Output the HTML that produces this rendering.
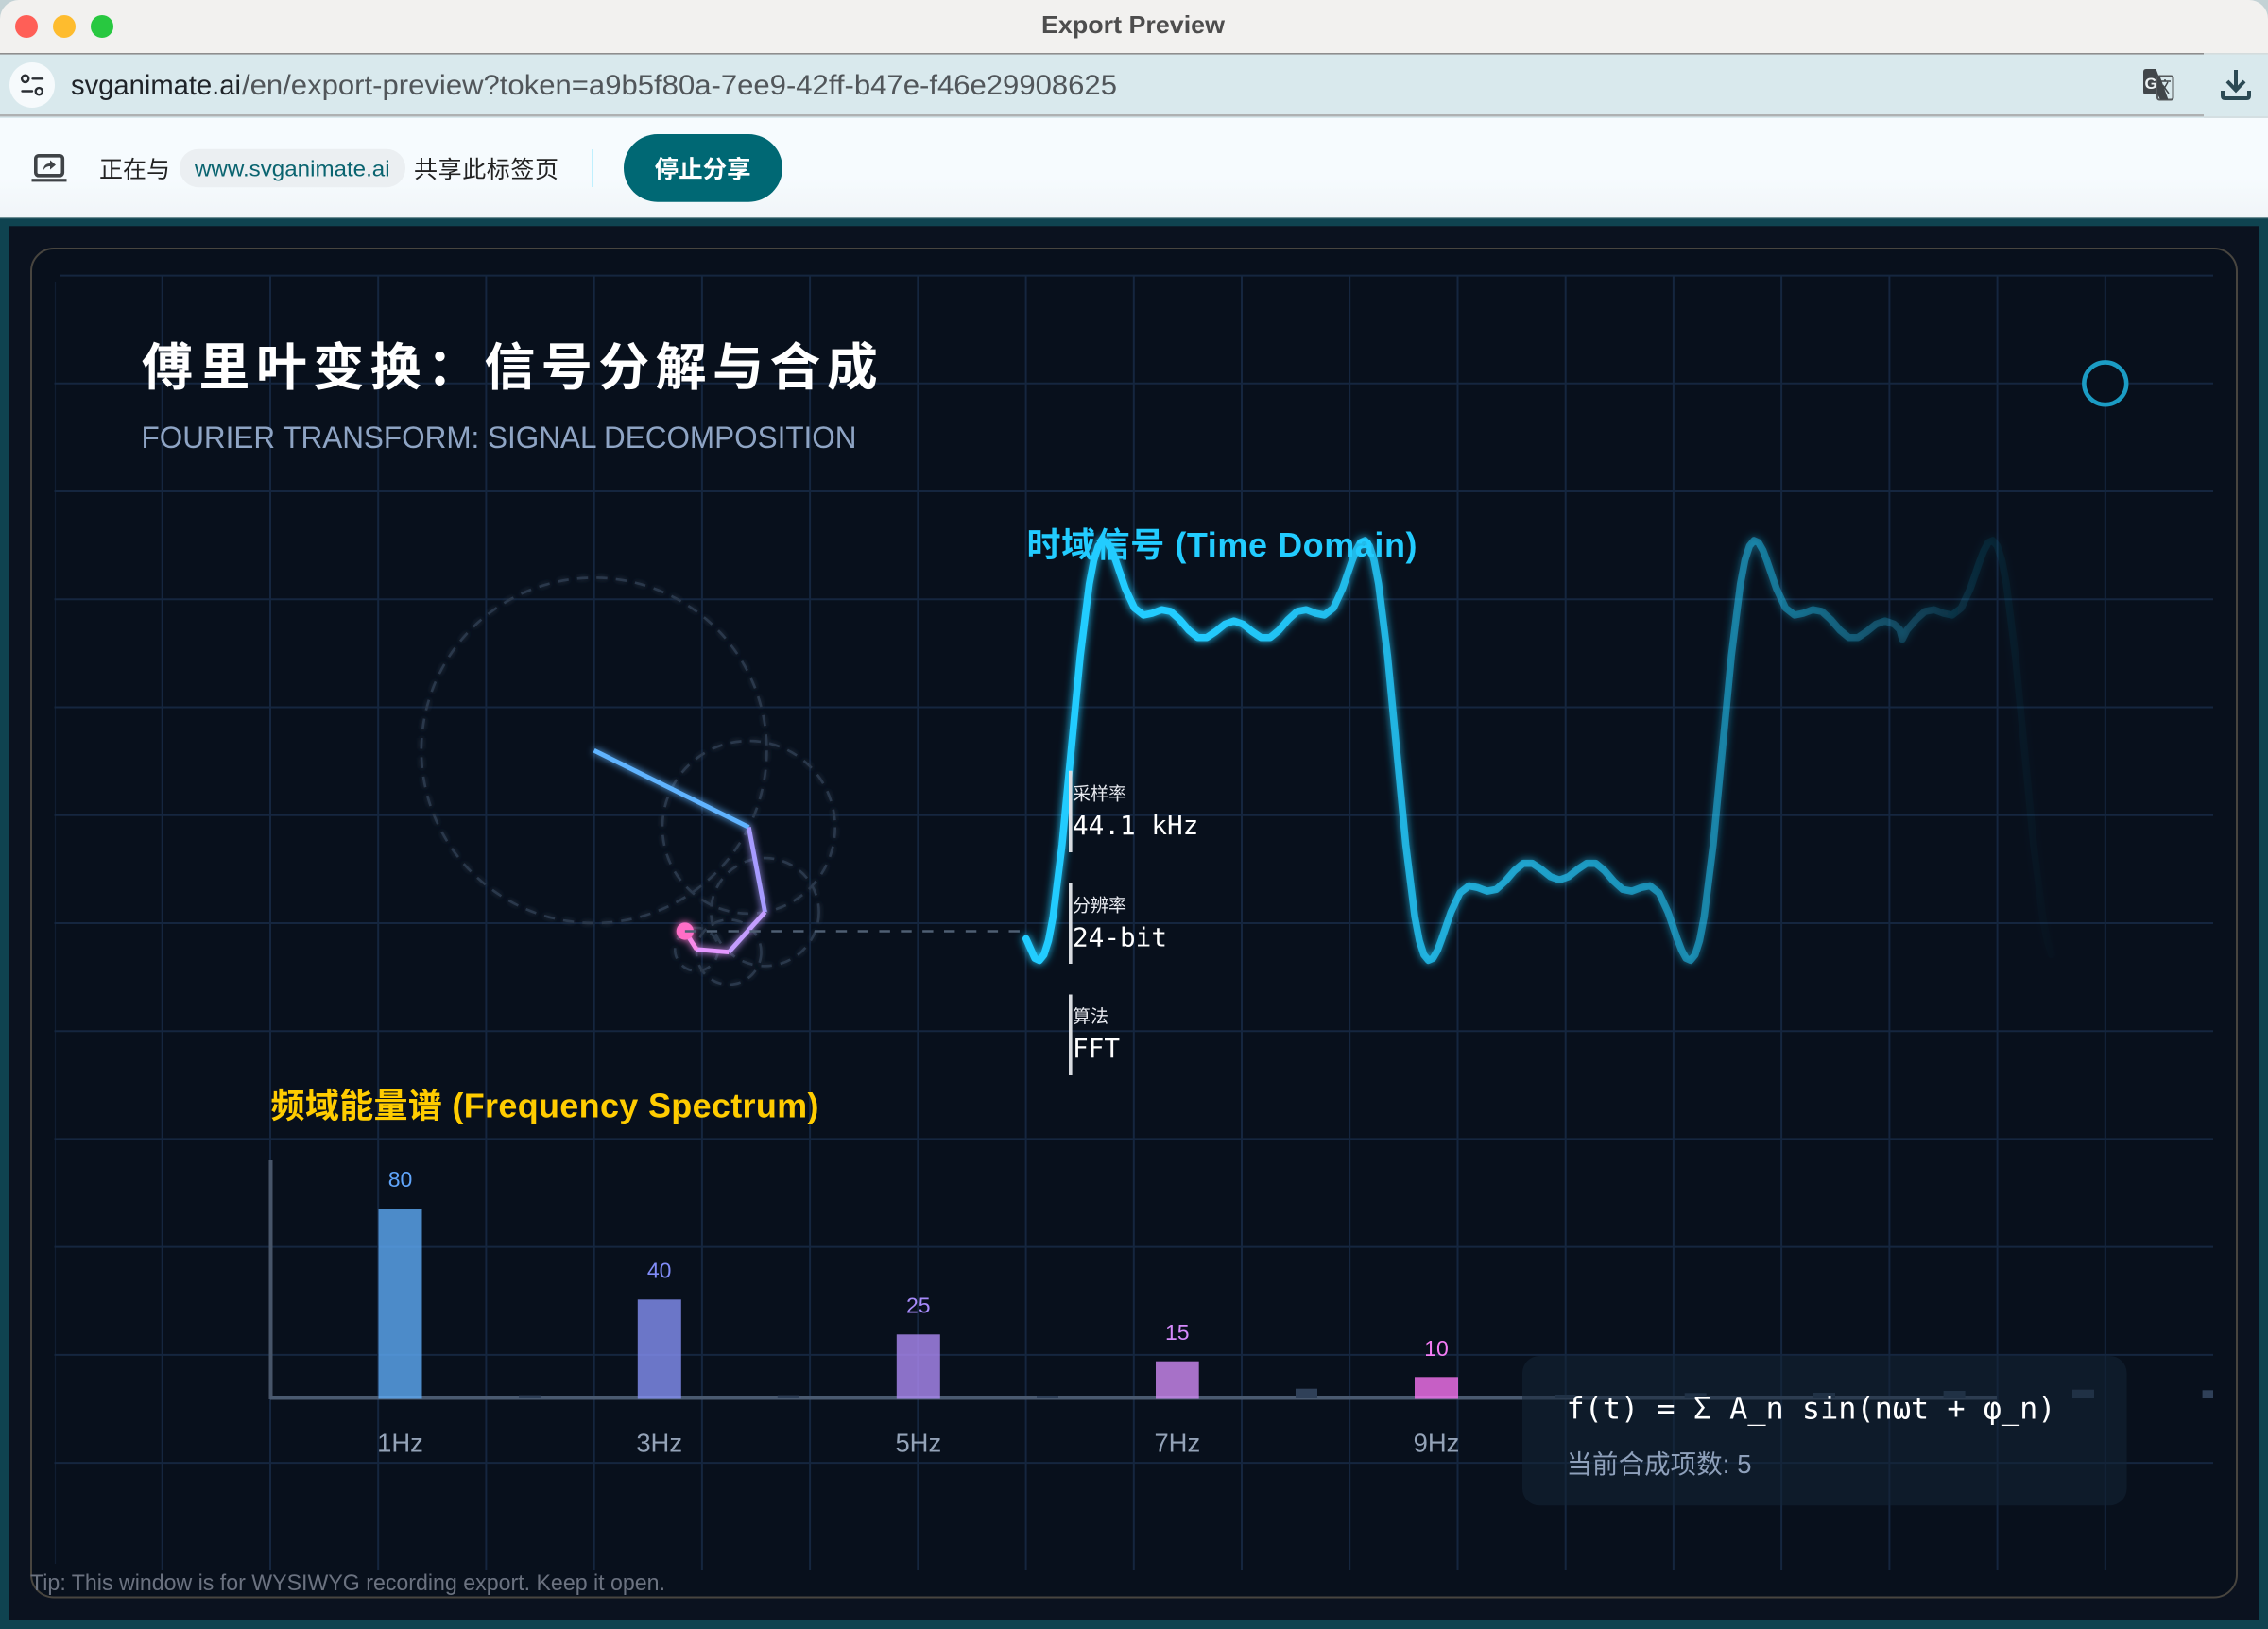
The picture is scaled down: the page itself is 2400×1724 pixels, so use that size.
<!DOCTYPE html>
<html lang="zh">
<head>
<meta charset="utf-8">
<title>Export Preview</title>
<style>
html,body{margin:0;padding:0;background:#c3d2d5;width:2400px;height:1724px;overflow:hidden}
svg{display:block}
text{font-family:"Liberation Sans","Noto Sans CJK SC",sans-serif}
.mono{font-family:"DejaVu Sans Mono","Liberation Mono","Noto Sans CJK SC",monospace}
</style>
</head>
<body>
<svg xmlns="http://www.w3.org/2000/svg" width="2400" height="1724" viewBox="0 0 2400 1724">
<defs>
  <linearGradient id="fade" gradientUnits="userSpaceOnUse" x1="450" y1="0" x2="930" y2="0">
    <stop offset="0" stop-color="#24ccff" stop-opacity="1"/>
    <stop offset=".15" stop-color="#24ccff" stop-opacity="1"/>
    <stop offset=".38" stop-color="#24ccff" stop-opacity=".74"/>
    <stop offset=".70" stop-color="#24ccff" stop-opacity=".44"/>
    <stop offset=".90" stop-color="#24ccff" stop-opacity=".11"/>
    <stop offset=".96" stop-color="#24ccff" stop-opacity=".03"/>
    <stop offset="1" stop-color="#24ccff" stop-opacity="0"/>
  </linearGradient>
  <linearGradient id="bar" x1="0" y1="0" x2="0" y2="1">
    <stop offset="0" stop-color="#f6fbfe"/>
    <stop offset=".6" stop-color="#f6fbfe"/>
    <stop offset="1" stop-color="#f1f5f8"/>
  </linearGradient>
  <filter id="glow" filterUnits="userSpaceOnUse" x="0" y="0" width="1000" height="600">
    <feGaussianBlur stdDeviation="2" result="b"/>
    <feMerge><feMergeNode in="b"/><feMergeNode in="SourceGraphic"/></feMerge>
  </filter>
  <filter id="glow2" filterUnits="userSpaceOnUse" x="0" y="0" width="1000" height="600">
    <feGaussianBlur stdDeviation="1.8" result="b"/>
    <feMerge><feMergeNode in="b"/><feMergeNode in="SourceGraphic"/></feMerge>
  </filter>
  <filter id="glow3" filterUnits="userSpaceOnUse" x="0" y="0" width="1000" height="600">
    <feGaussianBlur stdDeviation="1.2" result="b"/>
    <feMerge><feMergeNode in="b"/><feMergeNode in="SourceGraphic"/></feMerge>
  </filter>
</defs>

<!-- window chrome -->
<rect x="0" y="0" width="2400" height="80" rx="20" fill="#f2f1ef"/>
<rect x="0" y="40" width="2400" height="17" fill="#f2f1ef"/>
<rect x="0" y="57" width="2400" height="68" fill="#d9e9ed"/>
<rect x="0" y="56" width="2332" height="1.6" fill="#8e8e8e"/>
<rect x="2332" y="56" width="68" height="1.6" fill="#d4dcdd"/>
<rect x="0" y="121" width="2332" height="2.4" fill="#aeb1b2"/>
<rect x="2332" y="123" width="68" height="2" fill="#d4dfe2"/>
<rect x="0" y="125" width="2400" height="105" fill="url(#bar)"/>

<circle cx="28" cy="28" r="12" fill="#ff5f57"/>
<circle cx="68" cy="28" r="12" fill="#febc2e"/>
<circle cx="108" cy="28" r="12" fill="#28c840"/>
<text x="1102" y="35" font-size="26" font-weight="700" fill="#4d4d4d" textLength="194" lengthAdjust="spacingAndGlyphs">Export Preview</text>

<!-- address bar -->
<circle cx="34" cy="90" r="24" fill="#f6fafc"/>
<g fill="none" stroke="#2a2e33" stroke-width="2.4" stroke-linecap="round">
  <circle cx="26.7" cy="83.3" r="3.6"/>
  <path d="M34.5 83.3H45"/>
  <path d="M23.5 96.5H34"/>
  <circle cx="41.3" cy="96.7" r="3.6"/>
</g>
<text x="75" y="100" font-size="30" fill="#1f2328" textLength="180" lengthAdjust="spacingAndGlyphs">svganimate.ai</text>
<text x="256" y="100" font-size="30" fill="#51565a" textLength="926" lengthAdjust="spacingAndGlyphs">/en/export-preview?token=a9b5f80a-7ee9-42ff-b47e-f46e29908625</text>

<!-- translate icon -->
<path d="M2268 76q0-3 3-3h10.5l12.5 33h-8.500l-2-6h-13q-2.500 0-2.500-3z" fill="#41464a"/>
<rect x="2283" y="80.500" width="16.500" height="25" rx="2" fill="#d9e9ed" stroke="#55595c" stroke-width="2"/>
<path d="M2283 80.500h2.500l9 25h-8.500l-3-6z" fill="#41464a"/>
<text x="2269.500" y="94" font-size="17" font-weight="700" fill="#eef3f4">G</text>
<path d="M2285 86h12M2291 84v2M2287 99l7-12M2288.500 90l6.500 9" fill="none" stroke="#41464a" stroke-width="1.500"/>

<!-- download icon -->
<g fill="none" stroke="#2c4a54" stroke-width="4">
  <path d="M2366 74V95"/>
  <path d="M2357 86l9 9.500 9-9.500"/>
  <path d="M2352 96v5.500q0 2.500 2.500 2.500h23q2.500 0 2.500-2.500V96"/>
</g>

<!-- sharing infobar -->
<rect x="37.800" y="164.800" width="28.500" height="21" rx="3" fill="none" stroke="#3f4347" stroke-width="3.600"/>
<rect x="33.500" y="189.200" width="37" height="3.200" fill="#3f4347"/>
<path d="M46 180c0-5 3-7 7-7v-3.500l6 5-6 5V176c-3 0-5 1-7 4z" fill="#3f4347"/>
<text x="105" y="188" font-size="25" fill="#222" textLength="75">正在与</text>
<rect x="190" y="157.700" width="239" height="40.500" rx="20" fill="#ebeff2"/>
<text x="206" y="186.500" font-size="23.500" fill="#0a6470" textLength="206.600" lengthAdjust="spacingAndGlyphs">www.svganimate.ai</text>
<text x="438" y="188" font-size="25" fill="#222" textLength="153">共享此标签页</text>
<rect x="626.300" y="158" width="1.500" height="40" fill="#a8ecff"/>
<rect x="660" y="142" width="168" height="71.700" rx="35.800" fill="#006874"/>
<text x="692.600" y="188" font-size="25.500" font-weight="700" fill="#fff" textLength="102">停止分享</text>

<!-- stage -->
<rect x="0" y="230" width="2400" height="1494" fill="#0f4350"/>
<rect x="0" y="230" width="2400" height="1.200" fill="#6f8f94"/>
<rect x="10" y="239.300" width="2380" height="1474.700" fill="#0b121f"/>
<rect x="33" y="263" width="2334" height="1427.500" rx="24" fill="#08101c" stroke="#48453f" stroke-width="2"/>

<!-- grid -->
<g fill="none" stroke="#15263f" stroke-width="2">
  <path d="M64 291.600H2342M57.500 405.800H2342M57.500 520H2342M57.500 634.300H2342M57.500 748.500H2342M57.500 862.700H2342M57.500 977H2342M57.500 1091.200H2342M57.500 1205.400H2342M57.500 1319.600H2342M57.500 1433.900H2342M57.500 1548.100H2342"/>
  <path d="M171.700 291.600V1662M286 291.600V1662M400.200 291.600V1662M514.400 291.600V1662M628.700 291.600V1662M742.900 291.600V1662M857.100 291.600V1662M971.300 291.600V1662M1085.600 291.600V1662M1199.800 291.600V1662M1314 291.600V1662M1428.200 291.600V1662M1542.500 291.600V1662M1656.700 291.600V1662M1770.900 291.600V1662M1885.100 291.600V1662M1999.400 291.600V1662M2113.600 291.600V1662M2227.800 291.600V1662"/>
  <path d="M58.500 298V1655" stroke-width="1.200" opacity=".6"/>
</g>

<!-- headings -->
<text x="150" y="407.500" font-size="54" font-weight="700" fill="#fff" letter-spacing="6.400">傅里叶变换：信号分解与合成</text>
<text x="149.500" y="474" font-size="32" fill="#8ea4c4" textLength="757" lengthAdjust="spacingAndGlyphs">FOURIER TRANSFORM: SIGNAL DECOMPOSITION</text>
<g transform="translate(57.500 291.600) scale(2.2845)">
  <circle cx="950" cy="50" r="9.800" fill="#08101c" stroke="#1b9cc4" stroke-width="2"/>
  <!-- epicycle circles -->
  <g fill="none" stroke="#2b394c" stroke-width="1.150" stroke-dasharray="5 4" filter="url(#glow3)">
    <circle cx="250" cy="220" r="80"/>
    <circle cx="321.660" cy="255.570" r="40"/>
    <circle cx="329.160" cy="294.860" r="25"/>
    <circle cx="312.430" cy="313.440" r="15"/>
    <circle cx="297.480" cy="312.180" r="10"/>
  </g>
  <!-- arms -->
  <g fill="none" stroke-width="2.100" filter="url(#glow2)">
    <path d="M250 220L321.660 255.570" stroke="#60b4ff"/>
    <path d="M321.660 255.570L329.160 294.860" stroke="#a79bff"/>
    <path d="M329.160 294.860L312.430 313.440" stroke="#c49dff"/>
    <path d="M312.430 313.440L297.480 312.180" stroke="#e597ff"/>
    <path d="M297.480 312.180L292.120 303.740" stroke="#f88ae8"/>
    <circle cx="292.120" cy="303.740" r="4" fill="#ff6ec7" stroke="none"/>
  </g>
  <path d="M292.120 303.740H448" fill="none" stroke="#4f5f73" stroke-width="1.100" stroke-dasharray="5 5"/>
  <!-- time-domain wave -->
  <polyline transform="translate(.4 0)" filter="url(#glow)" fill="none" stroke="url(#fade)" stroke-width="3.300" stroke-linejoin="round" stroke-linecap="round"
   points="449.700,307.200 453.800,316.300 455.900,317.300 458,314.700 460.100,308.100 462.200,297.100 466.400,263.600 470.600,220 474.800,176.400 479,142.900 481.100,131.900 483.200,125.300 485.300,122.750 487.400,123.700 489.500,127.400 491.500,132.800 495.700,145 499.900,154 504.100,157.300 508.300,156.400 512.500,154.800 516.700,155.600 520.900,159.400 525.100,164.300 529.200,167.700 533.400,167.700 537.600,164.900 541.800,161.500 546,160 550.200,161.500 554.400,164.900 558.600,167.700 562.800,167.700 566.900,164.300 571.100,159.400 575.300,155.600 579.500,154.800 583.700,156.400 587.900,157.300 592.100,154 596.300,145 600.500,132.800 602.600,127.400 604.600,123.700 606.700,122.750 608.800,125.300 610.900,131.900 613,142.900 617.200,176.400 621.400,220 625.600,263.600 629.800,297.100 631.900,308.100 634,314.700 636.100,317.250 638.200,316.300 640.300,312.600 642.300,307.200 646.500,295 650.700,286 654.900,282.700 659.100,283.600 663.300,285.200 667.500,284.400 671.700,280.600 675.900,275.700 680,272.300 684.200,272.300 688.400,275.100 692.600,278.500 696.800,280 701,278.500 705.200,275.100 709.400,272.300 713.600,272.300 717.700,275.700 721.900,280.600 726.100,284.400 730.300,285.200 734.500,283.600 738.700,282.700 742.900,286 747.100,295 751.300,307.200 753.400,312.600 755.400,316.300 757.500,317.250 759.600,314.700 761.700,308.100 763.800,297.100 768,263.600 772.200,220 776.400,176.400 780.600,142.900 782.700,131.900 784.800,125.300 786.900,122.750 789,123.700 791.100,127.400 793.100,132.800 797.300,145 801.500,154 805.700,157.300 809.900,156.400 814.100,154.800 818.300,155.600 822.500,159.400 826.700,164.300 830.800,167.700 835,167.700 839.200,164.900 843.400,161.500 847.600,160 851.800,161.500 854.400,164 855.600,168.500 857.700,164.300 861.900,159.400 866.100,155.600 870.300,154.800 874.500,156.400 878.700,157.300 882.900,154 887.100,145 891.300,132.800 893.400,127.400 895.400,123.700 897.500,122.750 899.600,125.300 901.700,131.900 903.800,142.900 908,176.400 912.200,220 916.400,263.600 920.600,297.100 922.700,308.100 924.800,314.700"/>
</g>

<text x="1086.500" y="589" font-size="36" font-weight="700" fill="#22ccff" textLength="413">时域信号 (Time Domain)</text>

<!-- stats -->
<rect x="1131" y="815.700" width="3.600" height="86.300" fill="#d8dbe0"/>
<text x="1135" y="846.500" font-size="19" fill="#e8eaf0">采样率</text>
<text class="mono" x="1135" y="883" font-size="27.700" fill="#fff">44.1 kHz</text>
<rect x="1131" y="934" width="3.600" height="86" fill="#d8dbe0"/>
<text x="1135" y="964.500" font-size="19" fill="#e8eaf0">分辨率</text>
<text class="mono" x="1135" y="1001.400" font-size="27.700" fill="#fff">24-bit</text>
<rect x="1131" y="1052.500" width="3.600" height="85.500" fill="#d8dbe0"/>
<text x="1135" y="1082" font-size="19" fill="#e8eaf0">算法</text>
<text class="mono" x="1135" y="1119" font-size="27.700" fill="#fff">FFT</text>

<!-- spectrum -->
<text x="286.500" y="1182.700" font-size="36" font-weight="700" fill="#ffcc00" textLength="580">频域能量谱 (Frequency Spectrum)</text>
<rect x="284.500" y="1228" width="4" height="253" fill="#475569"/>
<rect x="286" y="1477" width="1827" height="4.500" fill="#4a5a70"/>
<g fill="#2f4058">
  <rect x="549" y="1476.700" width="23" height="2.600"/>
  <rect x="822.800" y="1476.700" width="23" height="2.600"/>
  <rect x="1097" y="1477" width="23" height="2.300"/>
  <rect x="1371" y="1469.700" width="23" height="9.600"/>
  <rect x="1645" y="1476" width="22.500" height="3.300"/>
  <rect x="1782.700" y="1474.300" width="23" height="5"/>
  <rect x="1919" y="1474" width="23" height="5.300"/>
  <rect x="2056.600" y="1472" width="23" height="7.300"/>
  <rect x="2193" y="1470.700" width="23" height="8.600"/>
  <rect x="2330.600" y="1471.300" width="11.400" height="8"/>
</g>
<g opacity=".8">
  <rect x="400.500" y="1279" width="46" height="201.500" fill="#5eaaf5"/>
  <rect x="674.800" y="1375.300" width="46" height="105.200" fill="#8490f4"/>
  <rect x="948.800" y="1412.300" width="46" height="68.200" fill="#ac8af4"/>
  <rect x="1223" y="1440.700" width="45.700" height="39.800" fill="#cf89f4"/>
  <rect x="1497" y="1457.300" width="46" height="23.200" fill="#f673f0"/>
</g>
<g font-size="23" text-anchor="middle">
  <text x="423.500" y="1256" fill="#60a5fa">80</text>
  <text x="697.700" y="1352.700" fill="#818cf8">40</text>
  <text x="971.800" y="1389.300" fill="#a78bfa">25</text>
  <text x="1245.800" y="1418" fill="#d68afc">15</text>
  <text x="1520" y="1435" fill="#f57cf5">10</text>
</g>
<g font-size="27.400" text-anchor="middle" fill="#94a3b8">
  <text x="423.500" y="1536.700">1Hz</text>
  <text x="697.700" y="1536.700">3Hz</text>
  <text x="971.800" y="1536.700">5Hz</text>
  <text x="1245.800" y="1536.700">7Hz</text>
  <text x="1520" y="1536.700">9Hz</text>
</g>

<!-- formula box -->
<rect x="1611" y="1435" width="639.500" height="158.300" rx="18" fill="#142436" fill-opacity=".55"/>
<text class="mono" x="1657.500" y="1501.700" font-size="31.900" fill="#fff" textLength="518">f(t) = Σ A_n sin(nωt + φ_n)</text>
<text x="1657.500" y="1559" font-size="27.400" fill="#8ea0bb" textLength="196">当前合成项数: 5</text>

<!-- tip -->
<text x="32" y="1683" font-size="24" fill="#6b7280" textLength="672" lengthAdjust="spacingAndGlyphs">Tip: This window is for WYSIWYG recording export. Keep it open.</text>
</svg>
</body>
</html>
